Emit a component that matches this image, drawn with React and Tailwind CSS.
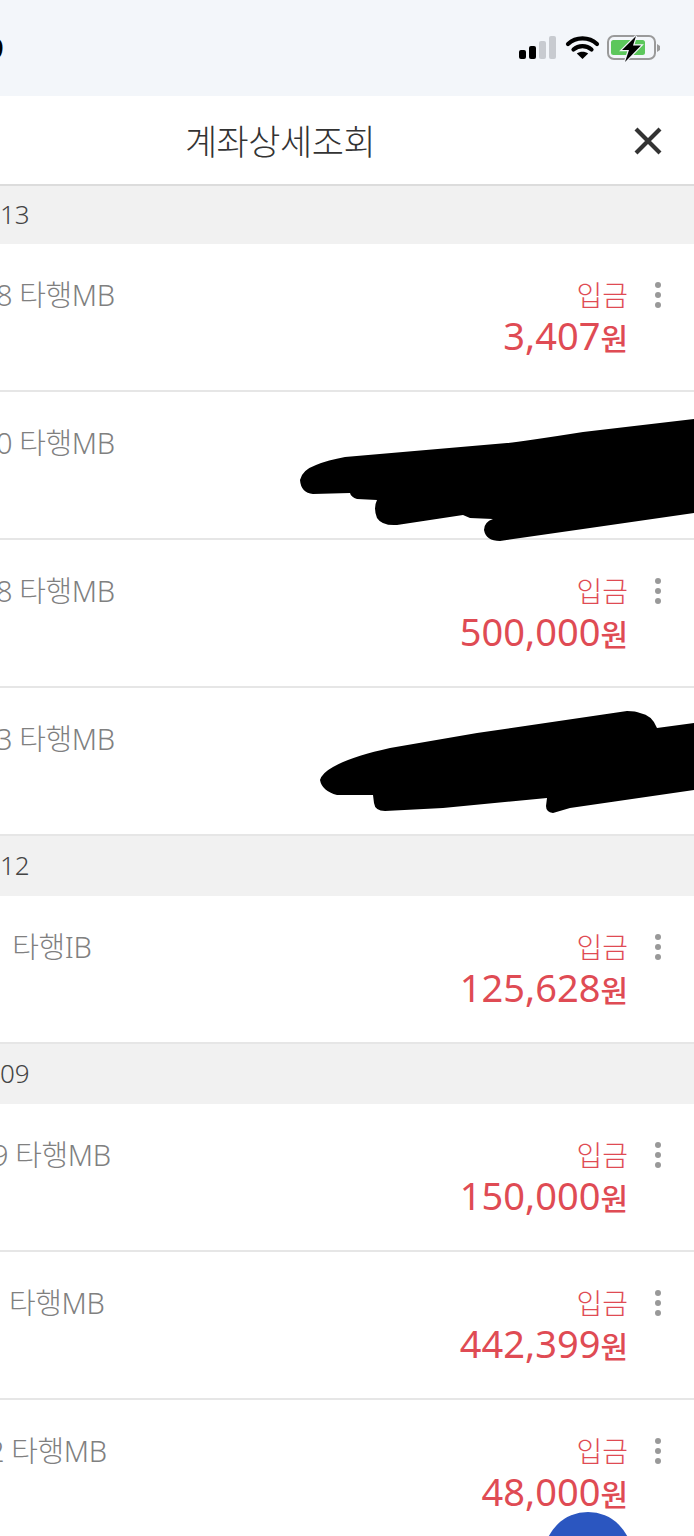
const FONT = 'font-["Noto_Sans","Noto_Sans_CJK_KR",sans-serif]'

const SECTIONS = [
  {
    date: '13',
    rows: [
      { left: '8 타행MB', offset: '-ml-[4px]', amount: '3,407' },
      { left: '0 타행MB', offset: '-ml-[4px]', hidden: true },
      { left: '8 타행MB', offset: '-ml-[4px]', amount: '500,000' },
      { left: '3 타행MB', offset: '-ml-[4px]', hidden: true },
    ],
  },
  { date: '12', rows: [{ left: '1 타행IB', offset: '-ml-[11px]', amount: '125,628' }] },
  {
    date: '09',
    rows: [
      { left: '9 타행MB', offset: '-ml-[8px]', amount: '150,000' },
      { left: '타행MB', offset: 'ml-[9px]', amount: '442,399' },
      { left: '2 타행MB', offset: '-ml-[12px]', amount: '48,000' },
    ],
  },
]

function StatusIcons() {
  return (
    <svg width="144" height="28" viewBox="0 0 144 28" className="block">
      <rect x="1" y="16" width="7" height="9" rx="2" fill="#000" />
      <rect x="11" y="12" width="7" height="13" rx="2" fill="#000" />
      <rect x="21" y="7" width="7" height="18" rx="2" fill="#c8cbd0" />
      <rect x="31" y="2" width="7" height="23" rx="2" fill="#c8cbd0" />
      <path d="M50 10 C58 2.5 71 2.5 79 10" fill="none" stroke="#000" strokeWidth="4.2" strokeLinecap="round" />
      <path d="M55.5 15.5 C60.5 11 68.5 11 73.5 15.5" fill="none" stroke="#000" strokeWidth="4.2" strokeLinecap="round" />
      <path d="M64.5 25 L58.8 19.6 C62 17 67 17 70.2 19.6 Z" fill="#000" />
      <rect x="90" y="2" width="47" height="23" rx="6" fill="none" stroke="#9a9a9a" strokeWidth="2" />
      <rect x="93" y="6" width="34" height="15" rx="2.5" fill="#5cc75c" />
      <path d="M139 10 L142 12 V16 L139 18 Z" fill="#9a9a9a" />
      <path d="M118 2 L104 16 H111 L107 28 L123 11.5 H115 Z" fill="#000" stroke="#f3f6fa" strokeWidth="2.4" paintOrder="stroke" />
    </svg>
  )
}

function Kebab() {
  return (
    <div className="flex flex-col gap-1 pt-[38px]">
      <span className="w-[6px] h-[6px] rounded-full bg-[#999999]" />
      <span className="w-[6px] h-[6px] rounded-full bg-[#999999]" />
      <span className="w-[6px] h-[6px] rounded-full bg-[#999999]" />
    </div>
  )
}

function Row({ row }) {
  return (
    <div className="h-[148px] border-b-2 border-[#e6e6e6] bg-white flex justify-between">
      <div className={`${row.offset} pt-[31px] text-[29px] leading-[40px] font-light text-[#808080] whitespace-nowrap tracking-[-0.4px]`}>
        {row.left}
      </div>
      <div className="flex pr-[33px] gap-[27px]">
        <div className="flex flex-col items-end pt-[31px] text-[#df4b54]">
          <div className="text-[28px] leading-[40px] font-light">입금</div>
          {!row.hidden && (
            <div className="text-[38px] leading-[40px] font-[450]">
              {row.amount}
              <span className="text-[30px] font-medium">원</span>
            </div>
          )}
        </div>
        {!row.hidden && <Kebab />}
      </div>
    </div>
  )
}

export default function App() {
  return (
    <div className={`${FONT} relative w-[694px] h-[1536px] overflow-hidden bg-white`}>
      {/* status bar */}
      <div className="h-[96px] bg-[#f3f6fa] flex items-center justify-between pr-[32px] overflow-hidden">
        <span className="-ml-[14px] text-[31px] font-semibold text-black">9</span>
        <StatusIcons />
      </div>

      {/* title */}
      <div className="relative h-[88px] flex items-center justify-center pr-[134px] pt-[3px] bg-white">
        <span className="text-[35px] leading-[44px] font-light text-[#333333] tracking-[-0.5px]">계좌상세조회</span>
        <svg width="28" height="28" viewBox="0 0 28 28" className="absolute right-[32px] top-[31px]">
          <path d="M2 2 L26 26 M26 2 L2 26" stroke="#333333" strokeWidth="4.2" strokeLinecap="butt" />
        </svg>
      </div>

      {SECTIONS.map((section, s) => (
        <div key={section.date}>
          <div className={`h-[60px] pb-[2px] bg-[#f1f1f1] flex items-center text-[26px] font-light text-[#444444] ${s === 0 ? 'border-t-2 border-[#dcdcdc]' : ''}`}>
            {section.date}
          </div>
          {section.rows.map((row, i) => (
            <Row key={i} row={row} />
          ))}
        </div>
      ))}

      {/* marker scribbles over the hidden amounts */}
      <svg width="694" height="1536" viewBox="0 0 694 1536" className="absolute inset-0 pointer-events-none">
        <path
          d="M300 480 Q302 470 316 465 Q328 460 345 457 L507 443 Q520 442 583 432 L694 419 L694 513 L590 528 L500 541 Q486 541 484 530 Q484 522 493 519 L470 518 L463 515 L397 525 Q382 526 377 518 Q373 508 377 500 L357 499 Q351 497 350 493 L313 494 Q301 493 300 480 Z"
          fill="#000"
        />
        <path
          d="M320 780 Q322 773 333 767 Q350 757 390 748 L477 733 L627 711 Q636 711 640 713 Q652 715 657 728 L694 723 L694 790 L570 808 L553 813 Q546 812 546 806 L547 798 L443 808 L385 811 Q375 811 374 803 L373 795 L337 795 Q322 791 320 780 Z"
          fill="#000"
        />
      </svg>

      {/* floating action button */}
      <div className="absolute left-[544px] top-[1512px] w-[88px] h-[88px] rounded-full bg-[#2b56c0]" />
    </div>
  )
}
